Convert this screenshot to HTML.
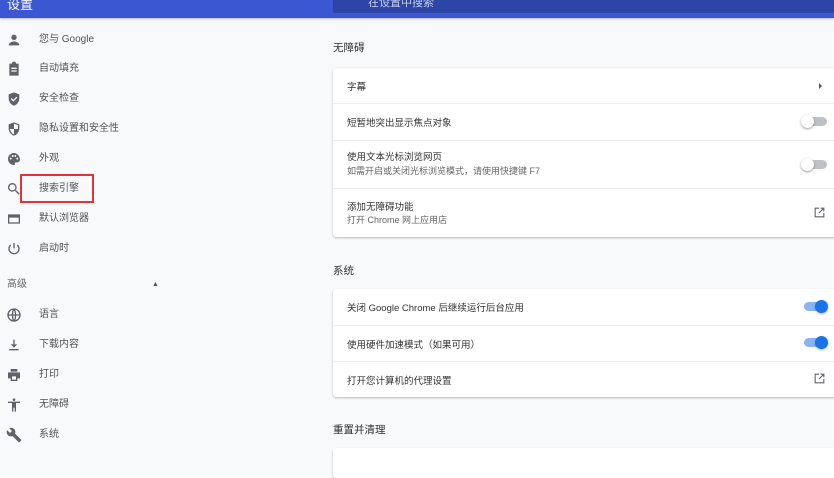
<!DOCTYPE html>
<html><head><meta charset="utf-8"><style>
*{margin:0;padding:0;box-sizing:border-box}
body{width:834px;height:456px;overflow:hidden;background:#f8f9fa;font-family:"Liberation Sans","Noto Sans CJK SC",sans-serif;font-size:10px;color:#333;position:relative}
.hdr{position:absolute;left:0;top:0;width:834px;height:18px;background:#3b57d1;box-shadow:0 1px 2px rgba(0,0,0,.25)}
.hdr .t{position:absolute;left:7px;top:-6px;color:#fff;font-size:13px}
.srch{position:absolute;left:333px;top:0;width:501px;height:13px;background:#2c45a6}
.srch span{position:absolute;left:35px;top:-6px;color:#c8d0f0;font-size:11px}
.nav{position:absolute;left:0;width:200px;height:16px;line-height:16px}
.nav svg{position:absolute;left:6px;top:0;width:16px;height:16px;fill:#5f6368}
.nav span{position:absolute;left:39px;color:#555;font-size:10px}
.red{position:absolute;left:20px;top:174px;width:74px;height:29px;border:2px solid #e4323a}
.sec{position:absolute;left:333px;font-size:10.5px;color:#333}
.card{position:absolute;left:333px;width:510px;background:#fff;box-shadow:0 1px 2px rgba(0,0,0,.25);border-radius:3px}
.row{position:absolute;left:0;width:100%;border-top:1px solid #eee}
.row .a{position:absolute;left:14px;font-size:9.5px;color:#333}
.row .b{position:absolute;left:14px;font-size:9px;color:#666}
.off{position:absolute;width:24px;height:9px;border-radius:5px;background:#bdc1c6}
.off:after{content:"";position:absolute;left:-2px;top:-2px;width:13px;height:13px;border-radius:50%;background:#fff;box-shadow:0 1px 2px rgba(0,0,0,.4)}
.on{position:absolute;width:22px;height:9px;border-radius:5px;background:#8ab4f8}
.on:after{content:"";position:absolute;left:11px;top:-2px;width:13px;height:13px;border-radius:50%;background:#1a73e8;box-shadow:0 1px 2px rgba(0,0,0,.3)}
.ext{position:absolute;left:813px;width:13px;height:13px}
</style></head><body>
<div class="hdr"><div class="t">设置</div><div class="srch"><span>在设置中搜索</span></div></div>

<div class="nav" style="top:32px"><svg viewBox="0 0 24 24"><circle cx="12" cy="8" r="4"/><path d="M4 20c0-4 5-6 8-6s8 2 8 6z"/></svg><span>您与 Google</span></div>
<div class="nav" style="top:61px"><svg viewBox="0 0 24 24"><path d="M5 4h4a3 3 0 016 0h4v18H5zM8 10h8v2H8zm0 4h8v2H8z" fill-rule="evenodd"/></svg><span>自动填充</span></div>
<div class="nav" style="top:91px"><svg viewBox="0 0 24 24"><path d="M12 2l8 3v6c0 5-3.5 9.5-8 11-4.5-1.5-8-6-8-11V5zm-1 14l6-6-1.4-1.4L11 13.2 8.4 10.6 7 12z" fill-rule="evenodd"/></svg><span>安全检查</span></div>
<div class="nav" style="top:121px"><svg viewBox="0 0 24 24"><path d="M12 2l8 3v6c0 5-3.5 9.5-8 11-4.5-1.5-8-6-8-11V5zm0 2v8H6c.5 4 3 7 6 8v-8h6V6.4z" fill-rule="evenodd"/></svg><span>隐私设置和安全性</span></div>
<div class="nav" style="top:151px"><svg viewBox="0 0 24 24"><path d="M12 3a9 9 0 000 18c1 0 1.5-.8 1.2-1.6-.5-1.2.3-2.4 1.6-2.4H17a4 4 0 004-4c0-5-4-10-9-10zM7 13a1.5 1.5 0 110-3 1.5 1.5 0 010 3zm3-4a1.5 1.5 0 110-3 1.5 1.5 0 010 3zm4 0a1.5 1.5 0 110-3 1.5 1.5 0 010 3zm3 4a1.5 1.5 0 110-3 1.5 1.5 0 010 3z" fill-rule="evenodd"/></svg><span>外观</span></div>
<div class="nav" style="top:181px"><svg viewBox="0 0 24 24"><path d="M15.5 14h-.8l-.3-.3A6.5 6.5 0 109.5 16a6.5 6.5 0 004.2-1.6l.3.3v.8l5 5 1.5-1.5zm-6 0a4.5 4.5 0 110-9 4.5 4.5 0 010 9z"/></svg><span>搜索引擎</span></div>
<div class="red"></div>
<div class="nav" style="top:211px"><svg viewBox="0 0 24 24"><path d="M3 5h18v14H3zm2 5v7h14v-7z" fill-rule="evenodd"/></svg><span>默认浏览器</span></div>
<div class="nav" style="top:241px"><svg viewBox="0 0 24 24" style="fill:none;stroke:#5f6368;stroke-width:2"><path d="M12 3v8M7 6a7.5 7.5 0 1010 0"/></svg><span>启动时</span></div>
<div class="nav" style="top:277px"><span style="left:7px;color:#666">高级</span><span style="left:152px;font-size:7px">▲</span></div>
<div class="nav" style="top:307px"><svg viewBox="0 0 24 24" style="fill:none;stroke:#5f6368;stroke-width:2"><circle cx="12" cy="12" r="9"/><path d="M3 12h18M12 3c-3 3-3 15 0 18M12 3c3 3 3 15 0 18"/></svg><span>语言</span></div>
<div class="nav" style="top:337px"><svg viewBox="0 0 24 24"><path d="M11 4h2v7h4l-5 5-5-5h4zM5 18h14v2H5z"/></svg><span>下载内容</span></div>
<div class="nav" style="top:367px"><svg viewBox="0 0 24 24"><path d="M7 3h10v4H7zM3 8h18v9h-4v4H7v-4H3zm6 6v5h6v-5z" fill-rule="evenodd"/></svg><span>打印</span></div>
<div class="nav" style="top:397px"><svg viewBox="0 0 24 24"><circle cx="12" cy="4" r="2"/><path d="M3 7h18v2h-6v13h-2v-6h-2v6H9V9H3z"/></svg><span>无障碍</span></div>
<div class="nav" style="top:427px"><svg viewBox="0 0 24 24"><path d="M22.7 19l-9.1-9.1c.9-2.3.4-5-1.5-6.9-2-2-5-2.4-7.4-1.3L9 6 6 9 1.6 4.7C.4 7.1.9 10.1 2.9 12.1c1.9 1.9 4.6 2.4 6.9 1.5l9.1 9.1c.4.4 1 .4 1.4 0l2.3-2.3c.5-.4.5-1.1.1-1.4z"/></svg><span>系统</span></div>

<div class="sec" style="top:40px">无障碍</div>
<div class="card" style="top:68px;height:169px">
  <div class="row" style="top:0;height:35px;border-top:none"><div class="a" style="top:11px">字幕</div><div style="position:absolute;left:486px;top:15px;width:0;height:0;border-left:3px solid #555;border-top:3px solid transparent;border-bottom:3px solid transparent"></div></div>
  <div class="row" style="top:35px;height:37px"><div class="a" style="top:11px">短暂地突出显示焦点对象</div></div>
  <div class="row" style="top:72px;height:48px"><div class="a" style="top:8px">使用文本光标浏览网页</div><div class="b" style="top:23px">如需开启或关闭光标浏览模式，请使用快捷键 F7</div></div>
  <div class="row" style="top:120px;height:49px"><div class="a" style="top:10px">添加无障碍功能</div><div class="b" style="top:24px">打开 Chrome 网上应用店</div></div>
</div>
<div class="off" style="left:803px;top:117px"></div>
<div class="off" style="left:803px;top:160px"></div>
<svg class="ext" style="top:206px" viewBox="0 0 24 24" fill="none" stroke="#5f6368" stroke-width="2"><path d="M11 4H4v16h16v-7M14 4h6v6M20 4l-9 9"/></svg>

<div class="sec" style="top:263px">系统</div>
<div class="card" style="top:289px;height:108px">
  <div class="row" style="top:0;height:36px;border-top:none"><div class="a" style="top:11px">关闭 Google Chrome 后继续运行后台应用</div></div>
  <div class="row" style="top:36px;height:36px"><div class="a" style="top:11px">使用硬件加速模式（如果可用）</div></div>
  <div class="row" style="top:72px;height:36px"><div class="a" style="top:11px">打开您计算机的代理设置</div></div>
</div>
<div class="on" style="left:804px;top:302px"></div>
<div class="on" style="left:804px;top:338px"></div>
<svg class="ext" style="top:372px" viewBox="0 0 24 24" fill="none" stroke="#5f6368" stroke-width="2"><path d="M11 4H4v16h16v-7M14 4h6v6M20 4l-9 9"/></svg>

<div class="sec" style="top:422px">重置并清理</div>
<div class="card" style="top:448px;height:30px"></div>
</body></html>
